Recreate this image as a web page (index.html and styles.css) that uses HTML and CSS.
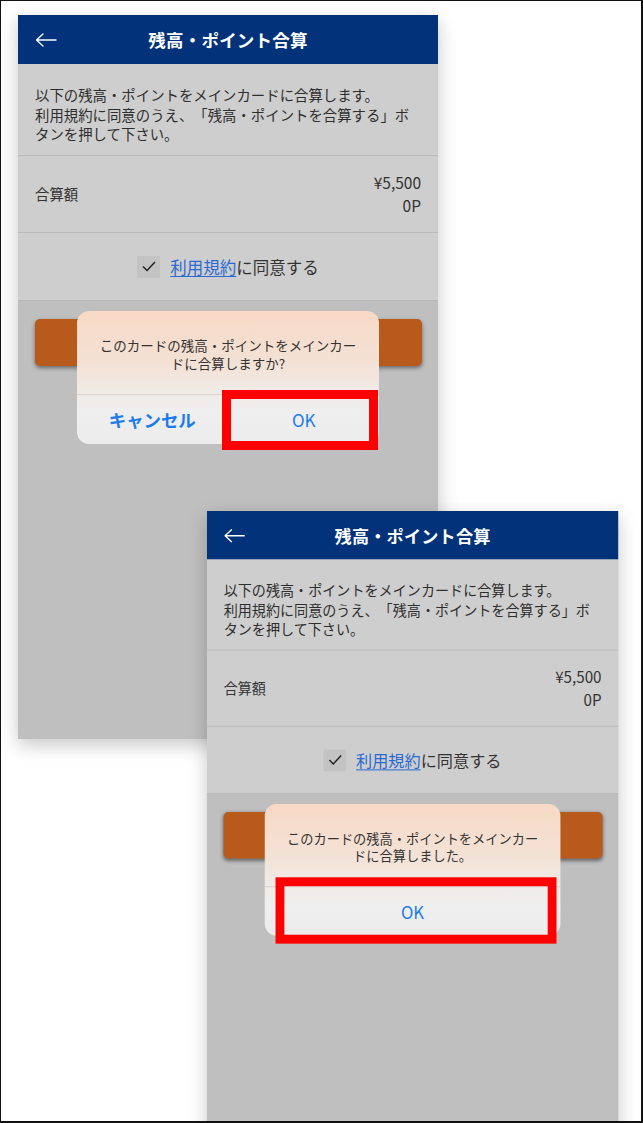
FILE: index.html
```html
<!DOCTYPE html>
<html lang="ja">
<head>
<meta charset="utf-8">
<title>残高・ポイント合算</title>
<link rel="stylesheet" href="styles.css">
</head>
<body>
<div class="frame">
  <section class="phone phone-a">
    <header class="bar">
      <svg class="back" width="22" height="14" viewBox="0 0 22 14"><path d="M1.5 7H21M8 1L1.5 7L8 13" fill="none" stroke="#fff" stroke-width="1.4" stroke-linecap="round" stroke-linejoin="round"/></svg>
      <h1 class="title">残高・ポイント合算</h1>
      <span></span>
    </header>
    <div class="desc">以下の残高・ポイントをメインカードに合算します。<br>利用規約に同意のうえ、「残高・ポイントを合算する」ボ<br>タンを押して下さい。</div>
    <div class="amount">
      <span class="label">合算額</span>
      <div class="values"><span>¥5,500</span><span>0P</span></div>
    </div>
    <div class="agree">
      <span class="check"><svg width="14" height="11" viewBox="0 0 14 11"><path d="M1 5.5L5 9.5L13 1" fill="none" stroke="#222" stroke-width="1.5"/></svg></span>
      <span class="agree-text"><span class="link">利用規約</span>に同意する</span>
    </div>
    <div class="lower">
      <div class="submit"></div>
    </div>
    <div class="alert">
      <div class="alert-msg">このカードの残高・ポイントをメインカー<br>ドに合算しますか?</div>
      <div class="alert-actions">
        <span class="alert-btn bold">キャンセル</span>
        <span class="alert-btn split">OK</span>
      </div>
      <div class="mark mark-a"></div>
    </div>
  </section>

  <section class="phone phone-b">
    <header class="bar">
      <svg class="back" width="22" height="14" viewBox="0 0 22 14"><path d="M1.5 7H21M8 1L1.5 7L8 13" fill="none" stroke="#fff" stroke-width="1.4" stroke-linecap="round" stroke-linejoin="round"/></svg>
      <h1 class="title">残高・ポイント合算</h1>
      <span></span>
    </header>
    <div class="desc">以下の残高・ポイントをメインカードに合算します。<br>利用規約に同意のうえ、「残高・ポイントを合算する」ボ<br>タンを押して下さい。</div>
    <div class="amount">
      <span class="label">合算額</span>
      <div class="values"><span>¥5,500</span><span>0P</span></div>
    </div>
    <div class="agree">
      <span class="check"><svg width="14" height="11" viewBox="0 0 14 11"><path d="M1 5.5L5 9.5L13 1" fill="none" stroke="#222" stroke-width="1.5"/></svg></span>
      <span class="agree-text"><span class="link">利用規約</span>に同意する</span>
    </div>
    <div class="lower">
      <div class="submit"></div>
    </div>
    <div class="alert">
      <div class="alert-msg">このカードの残高・ポイントをメインカー<br>ドに合算しました。</div>
      <div class="alert-actions">
        <span class="alert-btn">OK</span>
      </div>
      <div class="mark mark-b"></div>
    </div>
  </section>
</div>
</body>
</html>
```

FILE: styles.css
```css
* { box-sizing: border-box; }
html, body { margin: 0; padding: 0; background: #fff; }
body {
  font-family: "Noto Sans CJK JP", "Noto Sans", sans-serif;
  color: #333;
  text-spacing-trim: space-all;
}

.frame {
  position: relative;
  width: 643px;
  height: 1123px;
  overflow: hidden;
  background: #fff;
  border-style: solid;
  border-color: #111;
  border-width: 1px 2px 2px 1px;
}

.phone {
  position: absolute;
  width: 420px;
  height: 724px;
  display: flex;
  flex-direction: column;
  background: #bfbfbf;
  box-shadow: 0 6px 18px rgba(0, 0, 0, 0.22);
}
.phone-a { left: 17px; top: 14px; }
.phone-b { left: 206px; top: 510px; transform: scale(0.979, 0.99); transform-origin: 0 0; }

.bar {
  height: 49px;
  flex: none;
  background: #02337a;
  display: grid;
  grid-template-columns: 1fr auto 1fr;
  align-items: center;
  padding: 0 17px;
}
.back { display: block; }
.title {
  margin: 0;
  color: #fff;
  font-size: 17.5px;
  font-weight: 700;
  line-height: 1;
  letter-spacing: 0.2px;
}

.desc {
  background: #cecece;
  padding: 21px 17px 11px;
  font-size: 14.4px;
  line-height: 19.5px;
  white-space: nowrap;
  color: #2e2e2e;
  border-bottom: 1px solid #b9b9b9;
}

.amount {
  background: #cecece;
  display: flex;
  justify-content: space-between;
  align-items: center;
  padding: 15px 17px 15px 17px;
  border-bottom: 1px solid #b9b9b9;
}
.label { font-size: 14.4px; }
.values {
  display: flex;
  flex-direction: column;
  align-items: flex-end;
  font-size: 15.5px;
  line-height: 23px;
}

.agree {
  background: #cecece;
  height: 68px;
  display: flex;
  justify-content: center;
  align-items: center;
  gap: 10px;
  border-bottom: 1px solid #b6b6b6;
  padding-top: 1px;
}
.check {
  width: 23px;
  height: 22px;
  background: #c3c3c3;
  display: flex;
  align-items: center;
  justify-content: center;
}
.agree-text { font-size: 16.5px; line-height: 22px; }
.link { color: #2a6ad4; text-decoration: underline; text-underline-offset: 2px; }

.lower {
  flex: 1;
  background: #bfbfbf;
  padding: 18px 16px 0 17px;
}
.submit {
  height: 47px;
  border-radius: 5px;
  background: #b95a1d;
  box-shadow: 0 2px 4px rgba(0, 0, 0, 0.45);
}

.alert {
  position: absolute;
  left: 59px;
  top: 296px;
  width: 302px;
  border-radius: 12px;
  background: linear-gradient(180deg, #f7d9c5 0%, #f4e2d6 40%, #f0ebe7 62%, #efefef 75%, #ececec 100%);
}
.alert-msg {
  padding: 25px 18px 22px;
  text-align: center;
  font-size: 13.5px;
  line-height: 18px;
  color: #333;
  white-space: nowrap;
  border-bottom: 1px solid #d8d2ce;
}
.alert-actions {
  display: flex;
  height: 49px;
}
.alert-btn {
  flex: 1;
  display: flex;
  align-items: center;
  justify-content: center;
  color: #1a7bef;
  font-size: 17px;
}
.alert-btn.bold { font-weight: 700; font-size: 17.4px; }
.alert-btn.split { border-left: 1px solid #dcdcdc; }

.mark {
  position: absolute;
  border: 9px solid #ff0000;
}
.mark-a { left: 145px; top: 79px; width: 156px; height: 60px; }
.mark-b { left: 11px; top: 74px; width: 287px; height: 67px; }
```
